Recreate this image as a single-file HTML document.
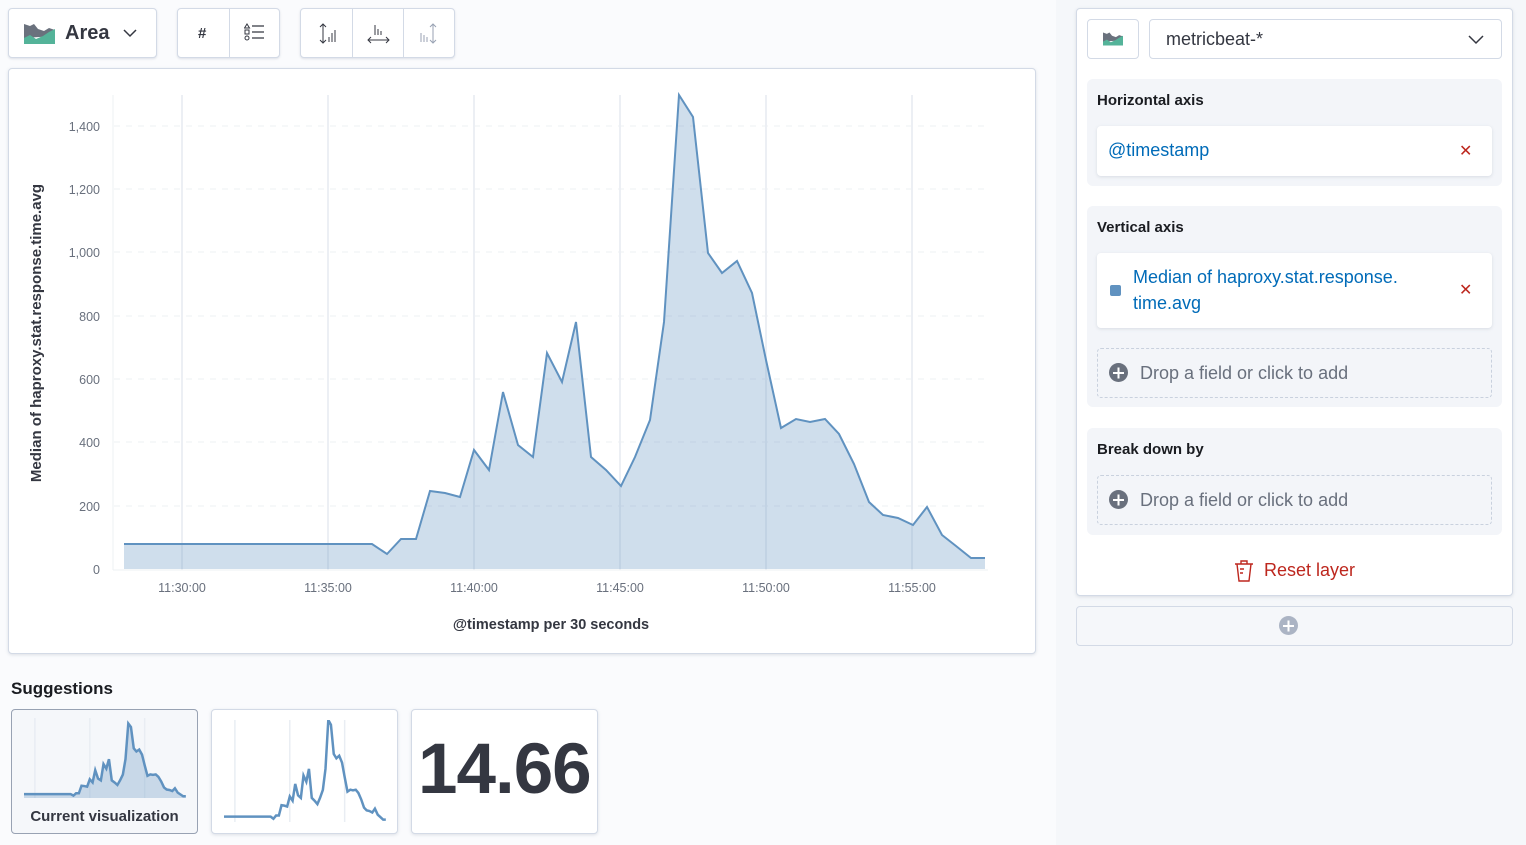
<!DOCTYPE html>
<html><head><meta charset="utf-8">
<style>
*{box-sizing:border-box;margin:0;padding:0}
body{width:1526px;height:845px;overflow:hidden;background:#fafbfd;font-family:"Liberation Sans",sans-serif;position:relative;color:#1a1c21}
.abs{position:absolute}
.btn{position:absolute;background:#fff;border:1px solid #d3dae6;border-radius:4px;box-shadow:0 1px 2px rgba(152,162,179,.3)}
.right{position:absolute;left:1056px;top:0;width:470px;height:845px;background:#f5f7fa}
.sec{position:absolute;background:#f3f5f9;border-radius:6px}
.card{position:absolute;background:#fff;border-radius:4px;box-shadow:0 1px 3px rgba(152,162,179,.3)}
.drop{position:absolute;border:1px dashed #c9d1de;border-radius:4px;color:#69707d;font-size:18px}
.lbl{position:absolute;font-size:15px;font-weight:bold;color:#1a1c21}
.plus{display:inline-block;width:19px;height:19px;border-radius:50%;background:#69707d;position:absolute;left:11px;top:14px}
.plus:before,.plus:after{content:"";position:absolute;background:#fff;left:4px;top:8.5px;width:11px;height:2px}
.plus:after{transform:rotate(90deg)}
</style></head><body>

<div class="btn" style="left:8px;top:8px;width:149px;height:50px">
 <svg class="abs" style="left:15px;top:15px" width="31" height="20" viewBox="0 0 31 20"><path d="M0 0 L6 2 L10 0 L14 5 L20 7 L25 4 L31 6 L31 12 L0 14Z" fill="#6a717d"/><path d="M0 14 L6 11 L12 15 L19 12 L25 8 L31 5 L31 20 L0 20Z" fill="#54b399"/></svg>
 <span class="abs" style="left:56px;top:13px;font-size:20px;font-weight:bold;color:#343741">Area</span>
 <svg class="abs" style="left:114px;top:20px" width="14" height="9"><path d="M1 1 L7 7 L13 1" fill="none" stroke="#343741" stroke-width="1.5"/></svg>
</div>
<div class="btn" style="left:177px;top:8px;width:103px;height:50px">
 <div class="abs" style="left:51px;top:0;width:1px;height:48px;background:#d3dae6"></div>
 <span class="abs" style="left:20px;top:16px;font-size:15px;font-weight:bold;color:#343741">#</span>
 <svg class="abs" style="left:66px;top:14px" width="22" height="22" viewBox="0 0 22 22"><path d="M3 1 L5.5 5 L0.5 5Z M1 7 H5 V11 H1Z" fill="none" stroke="#343741"/><circle cx="3" cy="15" r="2" fill="none" stroke="#343741"/><path d="M8 3 H20 M8 9 H20 M8 15 H20" stroke="#343741" stroke-width="1.2"/></svg>
</div>
<div class="btn" style="left:300px;top:8px;width:155px;height:50px">
 <div class="abs" style="left:51px;top:0;width:1px;height:48px;background:#d3dae6"></div>
 <div class="abs" style="left:102px;top:0;width:1px;height:48px;background:#d3dae6"></div>
 <svg class="abs" style="left:16px;top:14px" width="22" height="22"><path d="M6 1 V20 M3 4 L6 1 L9 4 M3 17 L6 20 L9 17" fill="none" stroke="#343741"/><path d="M12 14 V19 M15 10 V19 M18 7 V19" stroke="#343741"/></svg>
 <svg class="abs" style="left:66px;top:13px" width="24" height="24"><path d="M8 3 V13 M11 7 V13 M14 9 V13" stroke="#343741"/><path d="M1 18 H22 M4 15 L1 18 L4 21 M19 15 L22 18 L19 21" fill="none" stroke="#343741"/></svg>
 <svg class="abs" style="left:118px;top:14px" width="22" height="22"><path d="M2 10 V19 M5 12 V19 M8 14 V19" stroke="#98a2b3"/><path d="M14 1 V20 M11 4 L14 1 L17 4 M11 17 L14 20 L17 17" fill="none" stroke="#98a2b3"/></svg>
</div>

<div class="abs" style="left:8px;top:68px;width:1028px;height:586px;background:#fff;border:1px solid #d3dae6;border-radius:4px;box-shadow:0 1px 3px rgba(152,162,179,.3)"></div>
<svg class="abs" style="left:0;top:0" width="1056" height="660">
 <g stroke="#eef0f3" stroke-dasharray="6,6" stroke-width="1">
  <line x1="114" x2="988" y1="126" y2="126"/><line x1="114" x2="988" y1="189" y2="189"/><line x1="114" x2="988" y1="252" y2="252"/><line x1="114" x2="988" y1="316" y2="316"/><line x1="114" x2="988" y1="379" y2="379"/><line x1="114" x2="988" y1="442" y2="442"/><line x1="114" x2="988" y1="506" y2="506"/>
 </g>
 <g stroke="#eceff4" stroke-width="2">
  <line x1="182" x2="182" y1="95" y2="570"/><line x1="328" x2="328" y1="95" y2="570"/><line x1="474" x2="474" y1="95" y2="570"/><line x1="620" x2="620" y1="95" y2="570"/><line x1="766" x2="766" y1="95" y2="570"/><line x1="912" x2="912" y1="95" y2="570"/>
 </g>
 <line x1="113" x2="113" y1="95" y2="570" stroke="#eef0f3"/>
 <line x1="113" x2="988" y1="570" y2="570" stroke="#eef0f3"/>
 <path d="M124 569 L124 544 L372 544 L387 554 L401 539 L416 539 L430 491 L445 493 L460 497 L474 450 L489 470 L503 392 L518 445 L533 457 L547 353 L562 382 L576 322 L591 457 L606 470 L621 486 L635 457 L650 420 L664 322 L679 95 L693 117 L708 253 L722 273 L737 261 L752 293 L766 360 L781 428 L796 419 L810 422 L825 419 L839 434 L854 464 L869 502 L883 515 L898 518 L913 525 L927 507 L942 535 L956 546 L971 558 L985 558 L985 569Z" fill="rgba(96,146,192,.3)"/>
 <path d="M124 544 L372 544 L387 554 L401 539 L416 539 L430 491 L445 493 L460 497 L474 450 L489 470 L503 392 L518 445 L533 457 L547 353 L562 382 L576 322 L591 457 L606 470 L621 486 L635 457 L650 420 L664 322 L679 95 L693 117 L708 253 L722 273 L737 261 L752 293 L766 360 L781 428 L796 419 L810 422 L825 419 L839 434 L854 464 L869 502 L883 515 L898 518 L913 525 L927 507 L942 535 L956 546 L971 558 L985 558" fill="none" stroke="#6092c0" stroke-width="2"/>
 <g font-family="Liberation Sans" font-size="12.5" fill="#69707d" text-anchor="end">
  <text x="100" y="131">1,400</text><text x="100" y="194">1,200</text><text x="100" y="257">1,000</text><text x="100" y="321">800</text><text x="100" y="384">600</text><text x="100" y="447">400</text><text x="100" y="511">200</text><text x="100" y="574">0</text>
 </g>
 <g font-family="Liberation Sans" font-size="12.5" fill="#69707d" text-anchor="middle">
  <text x="182" y="592">11:30:00</text><text x="328" y="592">11:35:00</text><text x="474" y="592">11:40:00</text><text x="620" y="592">11:45:00</text><text x="766" y="592">11:50:00</text><text x="912" y="592">11:55:00</text>
 </g>
 <text x="551" y="629" text-anchor="middle" font-family="Liberation Sans" font-size="14.5" font-weight="bold" fill="#343741">@timestamp per 30 seconds</text>
 <text transform="translate(41,333) rotate(-90)" text-anchor="middle" font-family="Liberation Sans" font-size="15" font-weight="bold" fill="#343741">Median of haproxy.stat.response.time.avg</text>
</svg>

<div class="abs" style="left:11px;top:679px;font-size:17px;font-weight:bold">Suggestions</div>
<div class="abs" style="left:11px;top:709px;width:187px;height:125px;background:#f5f7fa;border:1px solid #98a2b3;border-radius:4px"></div>
<svg class="abs" style="left:24px;top:718px" width="162" height="80" viewBox="124 60 862 509" preserveAspectRatio="none">
 <g stroke="#e9edf3" stroke-width="8"><line x1="182" x2="182" y1="60" y2="569"/><line x1="474" x2="474" y1="60" y2="569"/><line x1="766" x2="766" y1="60" y2="569"/></g>
 <path d="M124 569 L124 544 L372 544 L387 554 L401 539 L416 539 L430 491 L445 493 L460 497 L474 450 L489 470 L503 392 L518 445 L533 457 L547 353 L562 382 L576 322 L591 457 L606 470 L621 486 L635 457 L650 420 L664 322 L679 95 L693 117 L708 253 L722 273 L737 261 L752 293 L766 360 L781 428 L796 419 L810 422 L825 419 L839 434 L854 464 L869 502 L883 515 L898 518 L913 525 L927 507 L942 535 L956 546 L971 558 L985 558 L985 569Z" fill="rgba(96,146,192,.3)"/>
 <path d="M124 544 L372 544 L387 554 L401 539 L416 539 L430 491 L445 493 L460 497 L474 450 L489 470 L503 392 L518 445 L533 457 L547 353 L562 382 L576 322 L591 457 L606 470 L621 486 L635 457 L650 420 L664 322 L679 95 L693 117 L708 253 L722 273 L737 261 L752 293 L766 360 L781 428 L796 419 L810 422 L825 419 L839 434 L854 464 L869 502 L883 515 L898 518 L913 525 L927 507 L942 535 L956 546 L971 558 L985 558" fill="none" stroke="#6092c0" stroke-width="2.5" vector-effect="non-scaling-stroke"/>
</svg>
<div class="abs" style="left:11px;top:808px;width:187px;text-align:center;font-size:15px;font-weight:bold;color:#343741">Current visualization</div>

<div class="abs" style="left:211px;top:709px;width:187px;height:125px;background:#fff;border:1px solid #d3dae6;border-radius:4px;box-shadow:0 1px 3px rgba(152,162,179,.3)"></div>
<svg class="abs" style="left:224px;top:720px" width="162" height="102" viewBox="124 95 862 474" preserveAspectRatio="none">
 <g stroke="#e9edf3" stroke-width="8"><line x1="182" x2="182" y1="95" y2="569"/><line x1="474" x2="474" y1="95" y2="569"/><line x1="766" x2="766" y1="95" y2="569"/></g>
 <path d="M124 544 L372 544 L387 554 L401 539 L416 539 L430 491 L445 493 L460 497 L474 450 L489 470 L503 392 L518 445 L533 457 L547 353 L562 382 L576 322 L591 457 L606 470 L621 486 L635 457 L650 420 L664 322 L679 95 L693 117 L708 253 L722 273 L737 261 L752 293 L766 360 L781 428 L796 419 L810 422 L825 419 L839 434 L854 464 L869 502 L883 515 L898 518 L913 525 L927 507 L942 535 L956 546 L971 558 L985 558" fill="none" stroke="#6092c0" stroke-width="2.5" vector-effect="non-scaling-stroke"/>
</svg>
<div class="abs" style="left:411px;top:709px;width:187px;height:125px;background:#fff;border:1px solid #d3dae6;border-radius:4px;box-shadow:0 1px 3px rgba(152,162,179,.3);overflow:hidden">
 <div class="abs" style="left:6px;top:19px;font-size:71px;font-weight:bold;color:#343741;letter-spacing:-1px;white-space:nowrap">14.66</div>
</div>

<div class="right"></div>
<div class="abs" style="left:1076px;top:8px;width:437px;height:588px;background:#fff;border:1px solid #d3dae6;border-radius:4px;box-shadow:0 1px 3px rgba(152,162,179,.3)"></div>
<div class="btn" style="left:1087px;top:19px;width:52px;height:40px;box-shadow:none">
 <svg class="abs" style="left:15px;top:12px" width="20" height="14" viewBox="0 0 31 20"><path d="M0 0 L6 2 L10 0 L14 5 L20 7 L25 4 L31 6 L31 12 L0 14Z" fill="#6a717d"/><path d="M0 14 L6 11 L12 15 L19 12 L25 8 L31 5 L31 20 L0 20Z" fill="#54b399"/></svg>
</div>
<div class="btn" style="left:1149px;top:19px;width:353px;height:40px;box-shadow:none">
 <span class="abs" style="left:16px;top:9px;font-size:18px;color:#343741">metricbeat-*</span>
 <svg class="abs" style="left:318px;top:15px" width="16" height="10"><path d="M1 1 L8 8 L15 1" fill="none" stroke="#343741" stroke-width="1.5"/></svg>
</div>

<div class="sec" style="left:1087px;top:79px;width:415px;height:107px"></div>
<div class="lbl" style="left:1097px;top:92px">Horizontal axis</div>
<div class="card" style="left:1097px;top:126px;width:395px;height:50px">
 <span class="abs" style="left:11px;top:14px;font-size:18px;color:#006bb8">@timestamp</span>
 <span class="abs" style="left:362px;top:15px;font-size:16px;color:#bd271e">✕</span>
</div>

<div class="sec" style="left:1087px;top:206px;width:415px;height:201px"></div>
<div class="lbl" style="left:1097px;top:219px">Vertical axis</div>
<div class="card" style="left:1097px;top:253px;width:395px;height:75px">
 <div class="abs" style="left:13px;top:32px;width:11px;height:11px;background:#6092c0;border-radius:2px"></div>
 <span class="abs" style="left:36px;top:11px;font-size:18px;line-height:26px;color:#006bb8">Median of haproxy.stat.response.<br>time.avg</span>
 <span class="abs" style="left:362px;top:27px;font-size:16px;color:#bd271e">✕</span>
</div>
<div class="drop" style="left:1097px;top:348px;width:395px;height:50px"><span class="plus"></span><span class="abs" style="left:42px;top:14px">Drop a field or click to add</span></div>

<div class="sec" style="left:1087px;top:428px;width:415px;height:107px"></div>
<div class="lbl" style="left:1097px;top:441px">Break down by</div>
<div class="drop" style="left:1097px;top:475px;width:395px;height:50px"><span class="plus"></span><span class="abs" style="left:42px;top:14px">Drop a field or click to add</span></div>

<svg class="abs" style="left:1234px;top:560px" width="20" height="22" viewBox="0 0 20 22"><path d="M1 4 H19 M7 4 V1 H13 V4 M3 4 L5 21 H15 L17 4 M6 9 H10 M6 13 H9" fill="none" stroke="#bd271e" stroke-width="1.4"/></svg>
<span class="abs" style="left:1264px;top:560px;font-size:18px;color:#bd271e">Reset layer</span>

<div class="abs" style="left:1076px;top:606px;width:437px;height:40px;border:1px solid #d3dae6;border-radius:4px;background:#f5f7fa"></div>
<span class="plus" style="left:1279px;top:616px;background:#abb4c4"></span>
</body></html>
